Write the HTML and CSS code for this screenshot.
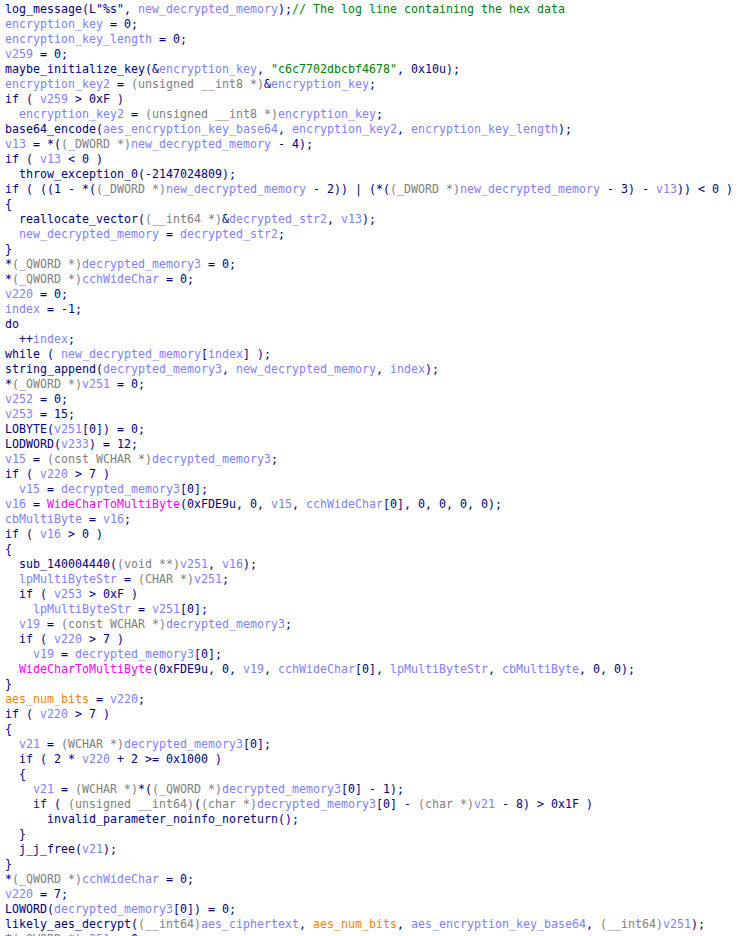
FILE: index.html
```html
<!DOCTYPE html>
<html>
<head>
<meta charset="utf-8">
<link rel="stylesheet" href="styles.css">
</head>
<body>
<pre class="code">log_message(L"%s", <span class="v">new_decrypted_memory</span>);<span class="c">// The log line containing the hex data</span>
<span class="v">encryption_key</span> = 0;
<span class="v">encryption_key_length</span> = 0;
<span class="v">v259</span> = 0;
maybe_initialize_key(&amp;<span class="v">encryption_key</span>, <span class="c">"c6c7702dbcbf4678"</span>, 0x10u);
<span class="v">encryption_key2</span> = <span class="t">(unsigned __int8 *)</span>&amp;<span class="v">encryption_key</span>;
if ( <span class="v">v259</span> &gt; 0xF )
  <span class="v">encryption_key2</span> = <span class="t">(unsigned __int8 *)</span><span class="v">encryption_key</span>;
base64_encode(<span class="v">aes_encryption_key_base64</span>, <span class="v">encryption_key2</span>, <span class="v">encryption_key_length</span>);
<span class="v">v13</span> = *(<span class="t">(_DWORD *)</span><span class="v">new_decrypted_memory</span> - 4);
if ( <span class="v">v13</span> &lt; 0 )
  throw_exception_0(-2147024809);
if ( ((1 - *(<span class="t">(_DWORD *)</span><span class="v">new_decrypted_memory</span> - 2)) | (*(<span class="t">(_DWORD *)</span><span class="v">new_decrypted_memory</span> - 3) - <span class="v">v13</span>)) &lt; 0 )
{
  reallocate_vector(<span class="t">(__int64 *)</span>&amp;<span class="v">decrypted_str2</span>, <span class="v">v13</span>);
  <span class="v">new_decrypted_memory</span> = <span class="v">decrypted_str2</span>;
}
*<span class="t">(_QWORD *)</span><span class="v">decrypted_memory3</span> = 0;
*<span class="t">(_QWORD *)</span><span class="v">cchWideChar</span> = 0;
<span class="v">v220</span> = 0;
<span class="v">index</span> = -1;
do
  ++<span class="v">index</span>;
while ( <span class="v">new_decrypted_memory</span>[<span class="v">index</span>] );
string_append(<span class="v">decrypted_memory3</span>, <span class="v">new_decrypted_memory</span>, <span class="v">index</span>);
*<span class="t">(_OWORD *)</span><span class="v">v251</span> = 0;
<span class="v">v252</span> = 0;
<span class="v">v253</span> = 15;
LOBYTE(<span class="v">v251</span>[0]) = 0;
LODWORD(<span class="v">v233</span>) = 12;
<span class="v">v15</span> = <span class="t">(const WCHAR *)</span><span class="v">decrypted_memory3</span>;
if ( <span class="v">v220</span> &gt; 7 )
  <span class="v">v15</span> = <span class="v">decrypted_memory3</span>[0];
<span class="v">v16</span> = <span class="f">WideCharToMultiByte</span>(0xFDE9u, 0, <span class="v">v15</span>, <span class="v">cchWideChar</span>[0], 0, 0, 0, 0);
<span class="v">cbMultiByte</span> = <span class="v">v16</span>;
if ( <span class="v">v16</span> &gt; 0 )
{
  sub_140004440(<span class="t">(void **)</span><span class="v">v251</span>, <span class="v">v16</span>);
  <span class="v">lpMultiByteStr</span> = <span class="t">(CHAR *)</span><span class="v">v251</span>;
  if ( <span class="v">v253</span> &gt; 0xF )
    <span class="v">lpMultiByteStr</span> = <span class="v">v251</span>[0];
  <span class="v">v19</span> = <span class="t">(const WCHAR *)</span><span class="v">decrypted_memory3</span>;
  if ( <span class="v">v220</span> &gt; 7 )
    <span class="v">v19</span> = <span class="v">decrypted_memory3</span>[0];
  <span class="f">WideCharToMultiByte</span>(0xFDE9u, 0, <span class="v">v19</span>, <span class="v">cchWideChar</span>[0], <span class="v">lpMultiByteStr</span>, <span class="v">cbMultiByte</span>, 0, 0);
}
<span class="h">aes_num_bits</span> = <span class="v">v220</span>;
if ( <span class="v">v220</span> &gt; 7 )
{
  <span class="v">v21</span> = <span class="t">(WCHAR *)</span><span class="v">decrypted_memory3</span>[0];
  if ( 2 * <span class="v">v220</span> + 2 &gt;= 0x1000 )
  {
    <span class="v">v21</span> = <span class="t">(WCHAR *)</span>*(<span class="t">(_QWORD *)</span><span class="v">decrypted_memory3</span>[0] - 1);
    if ( <span class="t">(unsigned __int64)</span>(<span class="t">(char *)</span><span class="v">decrypted_memory3</span>[0] - <span class="t">(char *)</span><span class="v">v21</span> - 8) &gt; 0x1F )
      invalid_parameter_noinfo_noreturn();
  }
  j_j_free(<span class="v">v21</span>);
}
*<span class="t">(_QWORD *)</span><span class="v">cchWideChar</span> = 0;
<span class="v">v220</span> = 7;
LOWORD(<span class="v">decrypted_memory3</span>[0]) = 0;
likely_aes_decrypt(<span class="t">(__int64)</span><span class="v">aes_ciphertext</span>, <span class="h">aes_num_bits</span>, <span class="v">aes_encryption_key_base64</span>, <span class="t">(__int64)</span><span class="v">v251</span>);
*<span class="t">(_QWORD *)</span><span class="v">v251</span> = 0;</pre>
</body>
</html>
```
FILE: styles.css
```css
html, body {
  margin: 0;
  padding: 0;
  background: #ffffff;
  overflow: hidden;
}
.code {
  margin: 0;
  padding: 2px 0 0 5px;
  font-family: "DejaVu Sans Mono", "Liberation Mono", monospace;
  font-size: 11.63px;
  line-height: 15px;
  color: #000080;
  white-space: pre;
}
.v { color: #8080ff; }
.t { color: #808080; }
.c { color: #008000; }
.f { color: #ff00ff; }
.h { color: #ff8000; }
```
